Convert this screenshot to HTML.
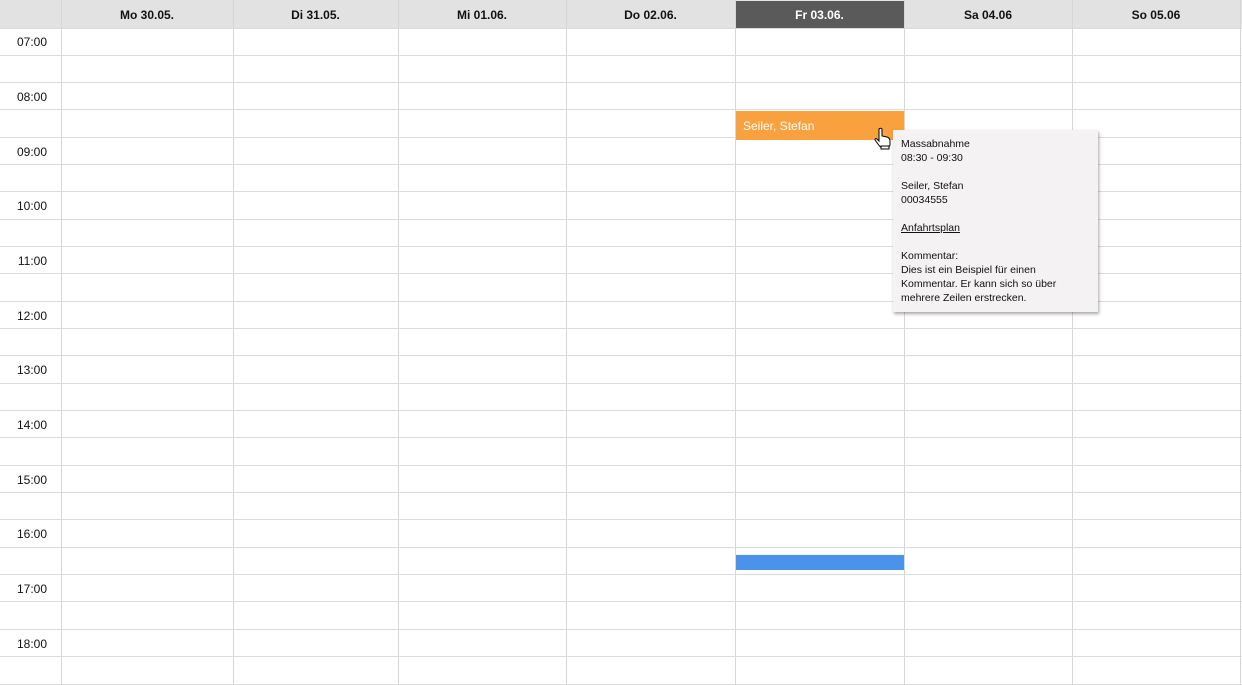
<!DOCTYPE html>
<html><head><meta charset="utf-8"><style>
*{margin:0;padding:0;box-sizing:border-box}
body{width:1242px;height:685px;background:#fff;font-family:"Liberation Sans",Arial,sans-serif;position:relative;overflow:hidden}
.hd{position:absolute;top:0;height:28px;background:#e2e2e2;font-weight:bold;font-size:12px;text-align:center;line-height:30px;color:#111}
.vl{position:absolute;top:0;width:1px;height:685px;background:#d6d6d6}
.hl{position:absolute;left:0;width:1242px;height:1px;background:#dcdcdc}
.t{position:absolute;left:0;width:47px;text-align:right;font-size:12px;color:#111}
.tip{position:absolute;left:893px;top:130px;width:205px;height:182px;background:#f4f2f2;box-shadow:1px 2px 3px rgba(0,0,0,.35);font-size:10.5px;line-height:14px;padding:7px 8px;color:#111}
</style></head><body>
<div class="hd" style="left:0;width:1242px"></div>
<div class="hd" style="left:61px;width:172px">Mo 30.05.</div>
<div class="hd" style="left:233px;width:165px">Di 31.05.</div>
<div class="hd" style="left:398px;width:168px">Mi 01.06.</div>
<div class="hd" style="left:566px;width:169px">Do 02.06.</div>
<div class="hd" style="left:735px;width:169px;background:#5a5a5a;color:#fff;top:1px;height:27px;line-height:28px">Fr 03.06.</div>
<div class="hd" style="left:904px;width:168px">Sa 04.06</div>
<div class="hd" style="left:1072px;width:168px">So 05.06</div>
<div class="vl" style="left:61px"></div><div class="vl" style="left:233px"></div><div class="vl" style="left:398px"></div><div class="vl" style="left:566px"></div><div class="vl" style="left:735px"></div><div class="vl" style="left:904px"></div><div class="vl" style="left:1072px"></div><div class="vl" style="left:1240px"></div>
<div class="hl" style="top:28px"></div><div class="hl" style="top:55px"></div><div class="hl" style="top:82px"></div><div class="hl" style="top:109px"></div><div class="hl" style="top:137px"></div><div class="hl" style="top:164px"></div><div class="hl" style="top:191px"></div><div class="hl" style="top:219px"></div><div class="hl" style="top:246px"></div><div class="hl" style="top:273px"></div><div class="hl" style="top:301px"></div><div class="hl" style="top:328px"></div><div class="hl" style="top:355px"></div><div class="hl" style="top:383px"></div><div class="hl" style="top:410px"></div><div class="hl" style="top:437px"></div><div class="hl" style="top:465px"></div><div class="hl" style="top:492px"></div><div class="hl" style="top:519px"></div><div class="hl" style="top:547px"></div><div class="hl" style="top:574px"></div><div class="hl" style="top:601px"></div><div class="hl" style="top:629px"></div><div class="hl" style="top:656px"></div><div class="hl" style="top:684px"></div>
<div class="t" style="top:35px">07:00</div><div class="t" style="top:90px">08:00</div><div class="t" style="top:145px">09:00</div><div class="t" style="top:199px">10:00</div><div class="t" style="top:254px">11:00</div><div class="t" style="top:309px">12:00</div><div class="t" style="top:363px">13:00</div><div class="t" style="top:418px">14:00</div><div class="t" style="top:473px">15:00</div><div class="t" style="top:527px">16:00</div><div class="t" style="top:582px">17:00</div><div class="t" style="top:637px">18:00</div>
<div style="position:absolute;left:736px;top:111px;width:168px;height:29px;background:#f9a13e;color:#fff;font-size:12px;line-height:31px;padding-left:7px">Seiler, Stefan</div>
<div style="position:absolute;left:736px;top:555px;width:168px;height:15px;background:#4a93ea"></div>
<div class="tip">Massabnahme<br>08:30 - 09:30<br><br>Seiler, Stefan<br>00034555<br><br><u>Anfahrtsplan</u><br><br>Kommentar:<br>Dies ist ein Beispiel für einen<br>Kommentar. Er kann sich so über<br>mehrere Zeilen erstrecken.</div>
<svg style="position:absolute;left:874px;top:127px" width="20" height="24" viewBox="0 0 20 24"><path d="M5 2 q1.5-1.5 3 0 v7 l5 1 q3 1 3 4 v4 q-1 3-3 3 h-5 q-2-1-4-4 l-3-4 q0-2 2-1 l2 2z" fill="#fff" stroke="#000" stroke-width="1"/><rect x="7" y="19" width="8" height="3" fill="#fff" stroke="#000"/></svg>
</body></html>
